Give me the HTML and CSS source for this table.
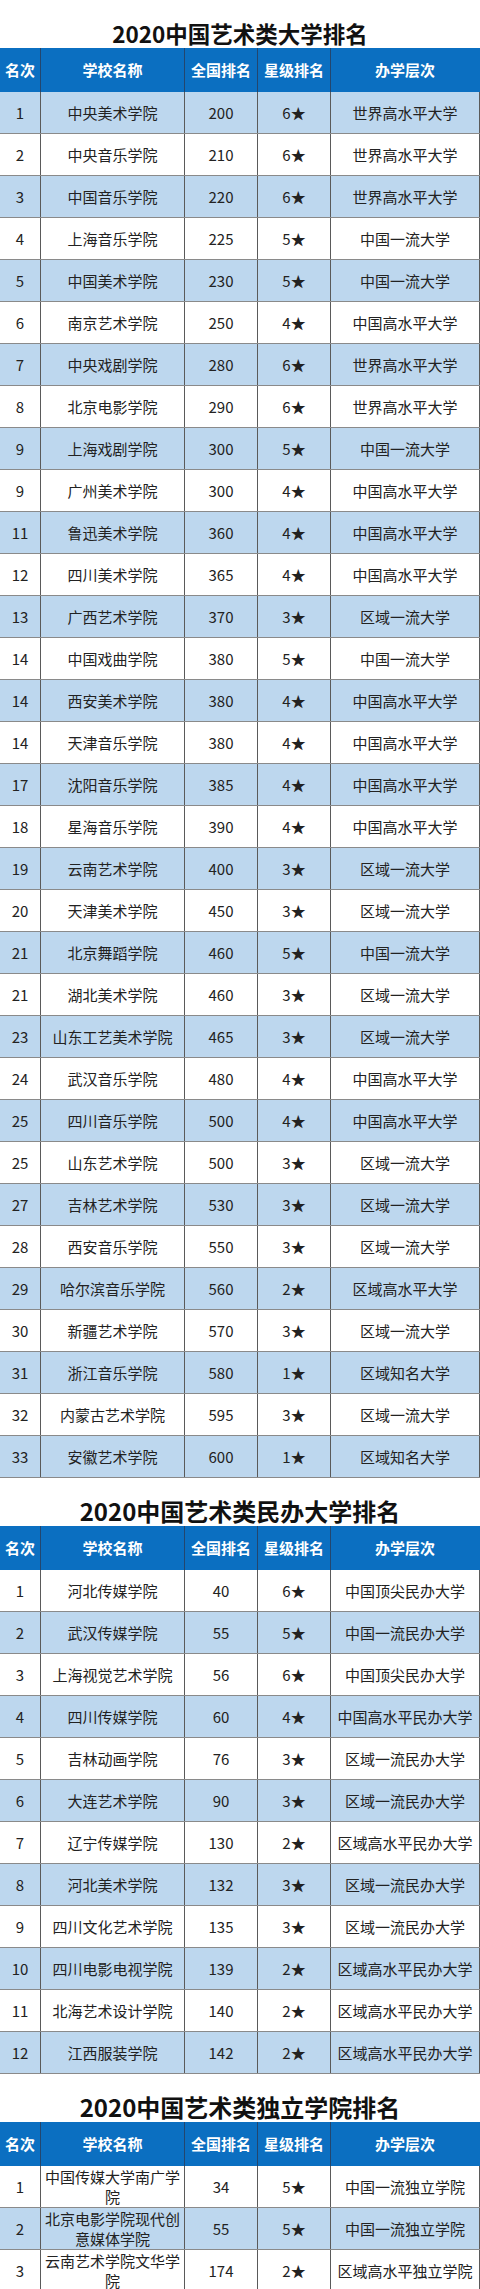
FILE: index.html
```html
<!DOCTYPE html>
<html lang="zh-CN">
<head>
<meta charset="utf-8">
<title>2020中国艺术类大学排名</title>
<link rel="stylesheet" href="styles.css">
</head>
<body>
<section class="block">
  <h1 class="title title-a">2020中国艺术类大学排名</h1>
  <div class="row head"><div class="c">名次</div><div class="c">学校名称</div><div class="c">全国排名</div><div class="c">星级排名</div><div class="c">办学层次</div></div>
  <div class="row alt"><div class="c">1</div><div class="c">中央美术学院</div><div class="c">200</div><div class="c">6★</div><div class="c">世界高水平大学</div></div>
  <div class="row"><div class="c">2</div><div class="c">中央音乐学院</div><div class="c">210</div><div class="c">6★</div><div class="c">世界高水平大学</div></div>
  <div class="row alt"><div class="c">3</div><div class="c">中国音乐学院</div><div class="c">220</div><div class="c">6★</div><div class="c">世界高水平大学</div></div>
  <div class="row"><div class="c">4</div><div class="c">上海音乐学院</div><div class="c">225</div><div class="c">5★</div><div class="c">中国一流大学</div></div>
  <div class="row alt"><div class="c">5</div><div class="c">中国美术学院</div><div class="c">230</div><div class="c">5★</div><div class="c">中国一流大学</div></div>
  <div class="row"><div class="c">6</div><div class="c">南京艺术学院</div><div class="c">250</div><div class="c">4★</div><div class="c">中国高水平大学</div></div>
  <div class="row alt"><div class="c">7</div><div class="c">中央戏剧学院</div><div class="c">280</div><div class="c">6★</div><div class="c">世界高水平大学</div></div>
  <div class="row"><div class="c">8</div><div class="c">北京电影学院</div><div class="c">290</div><div class="c">6★</div><div class="c">世界高水平大学</div></div>
  <div class="row alt"><div class="c">9</div><div class="c">上海戏剧学院</div><div class="c">300</div><div class="c">5★</div><div class="c">中国一流大学</div></div>
  <div class="row"><div class="c">9</div><div class="c">广州美术学院</div><div class="c">300</div><div class="c">4★</div><div class="c">中国高水平大学</div></div>
  <div class="row alt"><div class="c">11</div><div class="c">鲁迅美术学院</div><div class="c">360</div><div class="c">4★</div><div class="c">中国高水平大学</div></div>
  <div class="row"><div class="c">12</div><div class="c">四川美术学院</div><div class="c">365</div><div class="c">4★</div><div class="c">中国高水平大学</div></div>
  <div class="row alt"><div class="c">13</div><div class="c">广西艺术学院</div><div class="c">370</div><div class="c">3★</div><div class="c">区域一流大学</div></div>
  <div class="row"><div class="c">14</div><div class="c">中国戏曲学院</div><div class="c">380</div><div class="c">5★</div><div class="c">中国一流大学</div></div>
  <div class="row alt"><div class="c">14</div><div class="c">西安美术学院</div><div class="c">380</div><div class="c">4★</div><div class="c">中国高水平大学</div></div>
  <div class="row"><div class="c">14</div><div class="c">天津音乐学院</div><div class="c">380</div><div class="c">4★</div><div class="c">中国高水平大学</div></div>
  <div class="row alt"><div class="c">17</div><div class="c">沈阳音乐学院</div><div class="c">385</div><div class="c">4★</div><div class="c">中国高水平大学</div></div>
  <div class="row"><div class="c">18</div><div class="c">星海音乐学院</div><div class="c">390</div><div class="c">4★</div><div class="c">中国高水平大学</div></div>
  <div class="row alt"><div class="c">19</div><div class="c">云南艺术学院</div><div class="c">400</div><div class="c">3★</div><div class="c">区域一流大学</div></div>
  <div class="row"><div class="c">20</div><div class="c">天津美术学院</div><div class="c">450</div><div class="c">3★</div><div class="c">区域一流大学</div></div>
  <div class="row alt"><div class="c">21</div><div class="c">北京舞蹈学院</div><div class="c">460</div><div class="c">5★</div><div class="c">中国一流大学</div></div>
  <div class="row"><div class="c">21</div><div class="c">湖北美术学院</div><div class="c">460</div><div class="c">3★</div><div class="c">区域一流大学</div></div>
  <div class="row alt"><div class="c">23</div><div class="c">山东工艺美术学院</div><div class="c">465</div><div class="c">3★</div><div class="c">区域一流大学</div></div>
  <div class="row"><div class="c">24</div><div class="c">武汉音乐学院</div><div class="c">480</div><div class="c">4★</div><div class="c">中国高水平大学</div></div>
  <div class="row alt"><div class="c">25</div><div class="c">四川音乐学院</div><div class="c">500</div><div class="c">4★</div><div class="c">中国高水平大学</div></div>
  <div class="row"><div class="c">25</div><div class="c">山东艺术学院</div><div class="c">500</div><div class="c">3★</div><div class="c">区域一流大学</div></div>
  <div class="row alt"><div class="c">27</div><div class="c">吉林艺术学院</div><div class="c">530</div><div class="c">3★</div><div class="c">区域一流大学</div></div>
  <div class="row"><div class="c">28</div><div class="c">西安音乐学院</div><div class="c">550</div><div class="c">3★</div><div class="c">区域一流大学</div></div>
  <div class="row alt"><div class="c">29</div><div class="c">哈尔滨音乐学院</div><div class="c">560</div><div class="c">2★</div><div class="c">区域高水平大学</div></div>
  <div class="row"><div class="c">30</div><div class="c">新疆艺术学院</div><div class="c">570</div><div class="c">3★</div><div class="c">区域一流大学</div></div>
  <div class="row alt"><div class="c">31</div><div class="c">浙江音乐学院</div><div class="c">580</div><div class="c">1★</div><div class="c">区域知名大学</div></div>
  <div class="row"><div class="c">32</div><div class="c">内蒙古艺术学院</div><div class="c">595</div><div class="c">3★</div><div class="c">区域一流大学</div></div>
  <div class="row alt"><div class="c">33</div><div class="c">安徽艺术学院</div><div class="c">600</div><div class="c">1★</div><div class="c">区域知名大学</div></div>
</section>
<section class="block">
  <h1 class="title">2020中国艺术类民办大学排名</h1>
  <div class="row head"><div class="c">名次</div><div class="c">学校名称</div><div class="c">全国排名</div><div class="c">星级排名</div><div class="c">办学层次</div></div>
  <div class="row"><div class="c">1</div><div class="c">河北传媒学院</div><div class="c">40</div><div class="c">6★</div><div class="c">中国顶尖民办大学</div></div>
  <div class="row alt"><div class="c">2</div><div class="c">武汉传媒学院</div><div class="c">55</div><div class="c">5★</div><div class="c">中国一流民办大学</div></div>
  <div class="row"><div class="c">3</div><div class="c">上海视觉艺术学院</div><div class="c">56</div><div class="c">6★</div><div class="c">中国顶尖民办大学</div></div>
  <div class="row alt"><div class="c">4</div><div class="c">四川传媒学院</div><div class="c">60</div><div class="c">4★</div><div class="c">中国高水平民办大学</div></div>
  <div class="row"><div class="c">5</div><div class="c">吉林动画学院</div><div class="c">76</div><div class="c">3★</div><div class="c">区域一流民办大学</div></div>
  <div class="row alt"><div class="c">6</div><div class="c">大连艺术学院</div><div class="c">90</div><div class="c">3★</div><div class="c">区域一流民办大学</div></div>
  <div class="row"><div class="c">7</div><div class="c">辽宁传媒学院</div><div class="c">130</div><div class="c">2★</div><div class="c">区域高水平民办大学</div></div>
  <div class="row alt"><div class="c">8</div><div class="c">河北美术学院</div><div class="c">132</div><div class="c">3★</div><div class="c">区域一流民办大学</div></div>
  <div class="row"><div class="c">9</div><div class="c">四川文化艺术学院</div><div class="c">135</div><div class="c">3★</div><div class="c">区域一流民办大学</div></div>
  <div class="row alt"><div class="c">10</div><div class="c">四川电影电视学院</div><div class="c">139</div><div class="c">2★</div><div class="c">区域高水平民办大学</div></div>
  <div class="row"><div class="c">11</div><div class="c">北海艺术设计学院</div><div class="c">140</div><div class="c">2★</div><div class="c">区域高水平民办大学</div></div>
  <div class="row alt"><div class="c">12</div><div class="c">江西服装学院</div><div class="c">142</div><div class="c">2★</div><div class="c">区域高水平民办大学</div></div>
</section>
<section class="block">
  <h1 class="title">2020中国艺术类独立学院排名</h1>
  <div class="row head"><div class="c">名次</div><div class="c">学校名称</div><div class="c">全国排名</div><div class="c">星级排名</div><div class="c">办学层次</div></div>
  <div class="row"><div class="c">1</div><div class="c wrap">中国传媒大学南广学院</div><div class="c">34</div><div class="c">5★</div><div class="c">中国一流独立学院</div></div>
  <div class="row alt"><div class="c">2</div><div class="c wrap">北京电影学院现代创意媒体学院</div><div class="c">55</div><div class="c">5★</div><div class="c">中国一流独立学院</div></div>
  <div class="row"><div class="c">3</div><div class="c wrap">云南艺术学院文华学院</div><div class="c">174</div><div class="c">2★</div><div class="c">区域高水平独立学院</div></div>
</section>
</body>
</html>
```

FILE: styles.css
```css
* {
  box-sizing: border-box;
}

html, body {
  margin: 0;
  padding: 0;
  background: #ffffff;
}

body {
  width: 480px;
  font-family: "Noto Sans CJK SC", "Noto Sans", sans-serif;
  color: #222222;
}

.block {
  display: flex;
  flex-direction: column;
}

.title {
  margin: 0;
  height: 48px;
  padding-top: 19px;
  font-size: 24px;
  line-height: 28px;
  font-weight: 700;
  color: #111111;
  text-align: center;
  white-space: nowrap;
}

.title-a {
  font-size: 22.5px;
}

.row {
  display: grid;
  grid-template-columns: 41px 144px 73px 73px 149px;
  height: 42px;
  border-bottom: 1px solid #8a8a8a;
  background: #ffffff;
}

.row.alt {
  background: #bdd7ee;
}

.row.head {
  height: 44px;
  background: #0b6fc1;
  border-bottom: none;
  color: #ffffff;
  font-weight: 700;
}

.c {
  display: flex;
  align-items: center;
  justify-content: center;
  text-align: center;
  font-size: 15px;
  line-height: 20px;
  border-right: 1px solid #5a5a5a;
  padding: 0 2px;
  white-space: nowrap;
}

.head .c {
  border-right-color: #23466e;
  font-size: 15px;
}

.head .c:last-child {
  border-right-color: #0b6fc1;
}

.c.wrap {
  white-space: normal;
  padding: 0 4px;
}
```
